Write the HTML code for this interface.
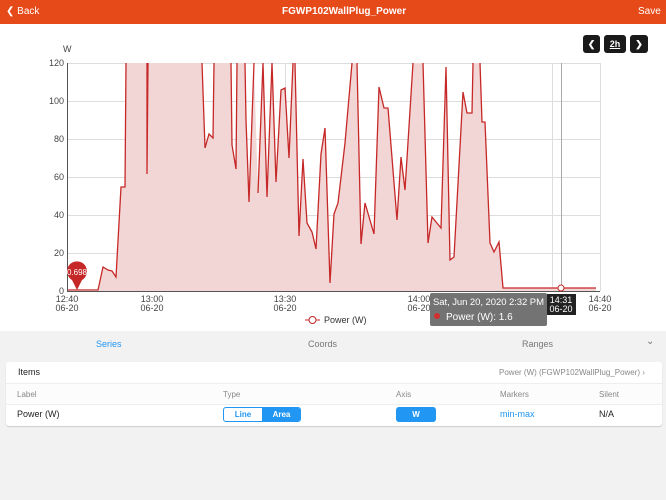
<!DOCTYPE html>
<html><head><meta charset="utf-8"><style>
*{margin:0;padding:0;box-sizing:border-box}
body{width:666px;height:500px;background:#f2f2f2;font-family:"Liberation Sans",sans-serif;position:relative;overflow:hidden}
.bar{position:absolute;left:0;top:0;width:666px;height:24px;background:#e64a19;color:#fff;font-size:10px;font-weight:bold}
.bar span{position:absolute;top:6px}
.chartbg{position:absolute;left:0;top:24px;width:666px;height:307px;background:#fff}
.btn{position:absolute;top:35px;height:18px;background:#1a1a1a;border-radius:3px;color:#fff;font-size:9px;font-weight:bold;text-align:center;line-height:18px}
.tabs{position:absolute;top:331px;left:0;width:666px;height:24px;font-size:9px;color:#777}
.tabs span{position:absolute;top:8px}
.card{position:absolute;left:6px;top:362px;width:656px;height:64px;background:#fff;border-radius:3px;box-shadow:0 1px 1px #ccc;font-size:9px;color:#222}
.card span{position:absolute}
.row{position:absolute;left:0;width:656px;border-top:1px solid #eee}
</style></head><body>
<div class="bar"><span style="left:6px;font-weight:normal;font-size:10px">&#10094; Back</span><span style="left:282px">FGWP102WallPlug_Power</span><span style="left:638px;font-weight:normal">Save</span></div>
<div class="chartbg"></div>
<div class="btn" style="left:583px;width:17px">&#10094;</div>
<div class="btn" style="left:604px;width:22px"><u>2h</u></div>
<div class="btn" style="left:630px;width:18px">&#10095;</div>
<svg style="position:absolute;left:0;top:0" width="666" height="331" font-family="Liberation Sans, sans-serif">
<g stroke="#ddd" stroke-width="1">
<line x1="67" y1="63.5" x2="600" y2="63.5"/><line x1="67" y1="101.5" x2="600" y2="101.5"/><line x1="67" y1="139.5" x2="600" y2="139.5"/><line x1="67" y1="177.5" x2="600" y2="177.5"/><line x1="67" y1="215.5" x2="600" y2="215.5"/><line x1="67" y1="253.5" x2="600" y2="253.5"/>
<line x1="152.5" y1="63" x2="152.5" y2="291"/><line x1="285.5" y1="63" x2="285.5" y2="291"/><line x1="419.5" y1="63" x2="419.5" y2="291"/><line x1="552.5" y1="63" x2="552.5" y2="291"/><line x1="600.5" y1="63" x2="600.5" y2="291"/>
</g>
<polygon fill="#f2d5d5" points="67,291 98,291 103,267 108,270 112,271 116,277 121,187 125,187 126,63 147,63 147,174 148,63 202,63 205,148 209,134 213,138 214,63 231,63 232,145 236,169 237,63 245,63 246,120 249,202 254,63 258,193 263,63 267,197 272,63 276,182 281,90 285,88 289,158 293,63 295,63 299,236 303,159 307,223 312,232 316,249 321,154 325,128 330,283 334,214 338,203 345,143 352,63 357,63 361,244 365,203 374,234 379,87 384,108 388,108 397,220 401,157 405,190 413,63 423,63 428,243 432,217 441,228 446,67 450,260 454,257 463,92 467,113 472,113 473,63 480,63 482,122 485,122 490,243 494,252 499,242 503,288 596,288 596,291"/>
<path fill="none" stroke="#c62828" stroke-width="1.3" d="M67,290 L98,290 103,267 108,270 112,271 116,277 121,187 125,187 126,63 M147,63 L147,174 148,63 M202,63 L205,148 209,134 213,138 214,63 M231,63 L232,145 236,169 237,63 M245,63 L246,120 249,202 254,63 M263,63 L258,193 M263,63 L267,197 272,63 M272,63 L276,182 281,90 285,88 289,158 293,63 M295,63 L299,236 303,159 307,223 312,232 316,249 321,154 325,128 330,283 334,214 338,203 345,143 352,63 M357,63 L361,244 365,203 374,234 379,87 384,108 388,108 397,220 401,157 405,190 413,63 M423,63 L428,243 432,217 441,228 446,67 450,260 454,257 463,92 467,113 472,113 473,63 M480,63 L482,122 485,122 490,243 494,252 499,242 503,288 596,288"/>
<line x1="67.5" y1="63" x2="67.5" y2="291" stroke="#555"/>
<line x1="67" y1="291.5" x2="600" y2="291.5" stroke="#555"/>
<line x1="561.5" y1="63" x2="561.5" y2="291" stroke="#aaa"/>
<circle cx="561" cy="288" r="3" fill="#fff" stroke="#c62828"/>
<g font-size="9" fill="#444" text-anchor="end">
<text x="64" y="66">120</text><text x="64" y="104">100</text><text x="64" y="142">80</text><text x="64" y="180">60</text><text x="64" y="218">40</text><text x="64" y="256">20</text><text x="64" y="294">0</text>
</g>
<text x="63" y="52" font-size="9" fill="#444">W</text>
<g font-size="9" fill="#444" text-anchor="middle">
<text x="67" y="302">12:40</text><text x="67" y="311">06-20</text>
<text x="152" y="302">13:00</text><text x="152" y="311">06-20</text>
<text x="285" y="302">13:30</text><text x="285" y="311">06-20</text>
<text x="419" y="302">14:00</text><text x="419" y="311">06-20</text>
<text x="600" y="302">14:40</text><text x="600" y="311">06-20</text>
</g>
<path d="M77,290 L72,280 A10,10 0 1 1 82,280 Z" fill="#c62828"/>
<text x="77" y="275" font-size="8" fill="#fff" text-anchor="middle">0.698</text>
<line x1="305" y1="320" x2="320" y2="320" stroke="#c62828"/><circle cx="312.5" cy="320" r="3.5" fill="#fff" stroke="#c62828"/>
<text x="324" y="323" font-size="9" fill="#333">Power (W)</text>
<rect x="430" y="293" width="117" height="33" rx="2" fill="#6b6b6b" opacity="0.95"/>
<text x="433" y="305" font-size="9.5" fill="#fff" textLength="111">Sat, Jun 20, 2020 2:32 PM</text>
<circle cx="437" cy="316" r="3" fill="#d32f2f"/>
<text x="446" y="320" font-size="10" fill="#fff">Power (W): 1.6</text>
<rect x="547" y="294" width="29" height="21" fill="#222"/>
<text x="561" y="303" font-size="9" fill="#fff" text-anchor="middle">14:31</text>
<text x="561" y="312" font-size="9" fill="#fff" text-anchor="middle">06-20</text>
</svg>
<div class="tabs"><span style="left:96px;color:#2196f3">Series</span><span style="left:308px">Coords</span><span style="left:522px">Ranges</span><span style="left:646px;top:5px;font-size:10px">&#8964;</span></div>
<div class="card">
<span style="left:12px;top:5px">Items</span>
<span style="left:493px;top:6px;color:#888;font-size:8px">Power (W) (FGWP102WallPlug_Power) &#8250;</span>
<div class="row" style="top:21px;height:21px;background:#fcfcfc"></div>
<span style="left:11px;top:28px;color:#888;font-size:8px">Label</span>
<span style="left:217px;top:28px;color:#888;font-size:8px">Type</span>
<span style="left:390px;top:28px;color:#888;font-size:8px">Axis</span>
<span style="left:494px;top:28px;color:#888;font-size:8px">Markers</span>
<span style="left:593px;top:28px;color:#888;font-size:8px">Silent</span>
<div class="row" style="top:42px"></div>
<span style="left:11px;top:47px">Power (W)</span>
<div style="position:absolute;left:217px;top:45px;width:78px;height:15px;border:1px solid #2196f3;border-radius:3px;overflow:hidden;font-size:8px;font-weight:bold">
<div style="position:absolute;left:0;top:0;width:38px;height:13px;color:#2196f3;text-align:center;line-height:13px">Line</div>
<div style="position:absolute;left:38px;top:0;width:39px;height:13px;background:#2196f3;color:#fff;text-align:center;line-height:13px">Area</div></div>
<div style="position:absolute;left:390px;top:45px;width:40px;height:15px;background:#2196f3;border-radius:3px;color:#fff;font-size:8px;font-weight:bold;text-align:center;line-height:15px">W</div>
<span style="left:494px;top:47px;color:#2196f3">min-max</span>
<span style="left:593px;top:47px">N/A</span>
</div>
</body></html>
